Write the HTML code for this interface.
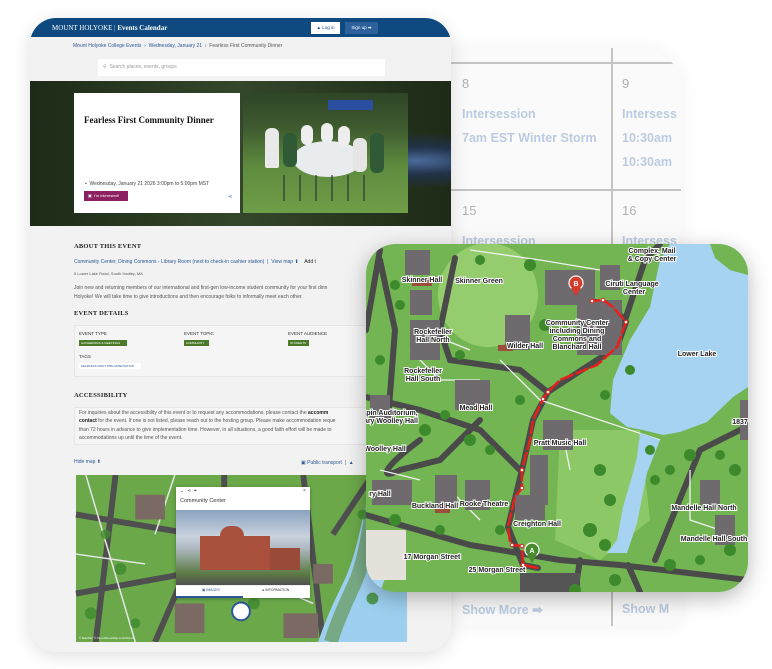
<!DOCTYPE html>
<html><head><meta charset="utf-8">
<style>
*{margin:0;padding:0;box-sizing:border-box}
body{width:772px;height:669px;background:#fff;position:relative;overflow:hidden;font-family:"Liberation Sans",sans-serif}
.a{position:absolute}
.cal{left:451px;top:48px;width:230px;height:578px;background:#fafafa;border-radius:0 40px 0 0;box-shadow:0 0 20px rgba(0,0,0,.06);overflow:hidden}
.cal .h{position:absolute;height:2px;background:#c4c4c4;left:0;right:0}
.cal .v{position:absolute;width:2px;background:#c4c4c4;top:0;bottom:0;left:160px}
.cal .n{position:absolute;color:#b0b0b0;font-size:13px}
.cal .t{position:absolute;color:#bccbe0;font-size:12.5px;font-weight:bold;white-space:nowrap}
.card{left:30px;top:18px;width:421px;height:634px;background:#f2f2f2;border-radius:26px;box-shadow:0 4px 18px rgba(0,0,0,.13);overflow:hidden}
.s{font-size:5px;color:#555;white-space:nowrap}
.lk{color:#2b5797}
.hd{font-family:"Liberation Serif",serif;font-weight:bold;font-size:6.5px;color:#222;letter-spacing:.2px}
.tag{background:#4c7a2a;color:#fff;font-size:3px;padding:1px 2px;display:inline-block;height:6px;overflow:hidden}
.mapc{left:366px;top:244px;width:382px;height:348px;border-radius:30px;overflow:hidden;box-shadow:0 6px 22px rgba(0,0,0,.28)}
</style></head><body>

<div class="a cal">
  <div class="h" style="top:14px"></div>
  <div class="h" style="top:141px"></div>
  <div class="v"></div>
  <div class="n" style="left:11px;top:28px">8</div>
  <div class="n" style="left:171px;top:28px">9</div>
  <div class="t" style="left:11px;top:59px">Intersession</div>
  <div class="t" style="left:11px;top:83px">7am EST Winter Storm</div>
  <div class="t" style="left:171px;top:59px">Intersess</div>
  <div class="t" style="left:171px;top:83px">10:30am</div>
  <div class="t" style="left:171px;top:107px">10:30am</div>
  <div class="n" style="left:11px;top:155px">15</div>
  <div class="n" style="left:171px;top:155px">16</div>
  <div class="t" style="left:11px;top:186px">Intersession</div>
  <div class="t" style="left:171px;top:186px">Intersess</div>
  <div class="t" style="left:11px;top:554px">Show More ➡</div>
  <div class="t" style="left:171px;top:554px">Show M</div>
</div>

<div class="a card">
  <div class="a" style="left:0;top:0;width:421px;height:19px;background:#0e4a80"></div>
  <div class="a" style="left:22px;top:6px;color:#fff;font-family:'Liberation Serif',serif;font-size:7px;white-space:nowrap">MOUNT HOLYOKE <span style="opacity:.8">|</span> <b>Events Calendar</b></div>
  <div class="a" style="left:281px;top:4px;width:29px;height:12px;background:#fff;font-size:4.5px;color:#0e4a80;text-align:center;line-height:12px">▲ Log in</div>
  <div class="a" style="left:315px;top:4px;width:33px;height:12px;background:#2d619e;font-size:4.5px;color:#fff;text-align:center;line-height:12px">Sign up ➡</div>
  <div class="a s lk" style="left:43px;top:25px">Mount Holyoke College Events &nbsp;›&nbsp; Wednesday, January 21 &nbsp;<span style="color:#555">›&nbsp; Fearless First Community Dinner</span></div>
  <div class="a" style="left:68px;top:41px;width:287px;height:17px;background:#fff"></div>
  <div class="a s" style="left:73px;top:46px;color:#999">⚲ &nbsp;Search places, events, groups</div>
  <div class="a" style="left:0;top:63px;width:421px;height:145px;background:radial-gradient(ellipse at 92% 55%,#4a6a9a 0,#22324a 12%,transparent 25%),linear-gradient(90deg,#1d2a17,#34472a 50%,#1d2a17);"></div>
  <div class="a" style="left:44px;top:75px;width:166px;height:120px;background:#fff"></div>
  <div class="a" style="left:213px;top:75px;width:165px;height:120px;background:linear-gradient(180deg,#2f4527 0,#3f5c30 30%,#5d8a3e 60%,#6f9e48 100%);overflow:hidden">
    <div class="a" style="left:85px;top:7px;width:45px;height:10px;background:#2a4fa0"></div>
    <div class="a" style="left:50px;top:48px;width:70px;height:36px;background:#e8ecef;border-radius:50%"></div>
    <div class="a" style="left:22px;top:35px;width:14px;height:40px;background:#e9e9e9;border-radius:6px 6px 2px 2px"></div>
    <div class="a" style="left:40px;top:40px;width:14px;height:34px;background:#2f5a35;border-radius:6px"></div>
    <div class="a" style="left:58px;top:32px;width:12px;height:20px;background:#eee;border-radius:6px"></div>
    <div class="a" style="left:78px;top:30px;width:12px;height:20px;background:#eee;border-radius:6px"></div>
    <div class="a" style="left:95px;top:33px;width:12px;height:20px;background:#eee;border-radius:6px"></div>
    <div class="a" style="left:110px;top:45px;width:14px;height:34px;background:#e5e5e5;border-radius:6px"></div>
    <div class="a" style="left:127px;top:40px;width:14px;height:40px;background:#2f5a35;border-radius:6px"></div>
    <div class="a" style="left:40px;top:82px;width:90px;height:26px;background:repeating-linear-gradient(90deg,#333 0 2px,transparent 2px 16px);opacity:.6"></div>
  </div>
  <div class="a" style="left:54px;top:97px;font-family:'Liberation Serif',serif;font-weight:bold;font-size:9px;color:#111;white-space:nowrap">Fearless First Community Dinner</div>
  <div class="a s" style="left:55px;top:163px;color:#444">▪ &nbsp;Wednesday, January 21 2026 3:00pm to 5:00pm MST</div>
  <div class="a" style="left:54px;top:173px;width:44px;height:10px;background:#8c2060;color:#fff;font-size:4px;line-height:10px;padding-left:4px">▣ &nbsp;I'm interested!</div>
  <div class="a" style="left:198px;top:176px;font-size:5px;color:#2b5797">⋖</div>

  <div class="a hd" style="left:44px;top:225px">ABOUT THIS EVENT</div>
  <div class="a s lk" style="left:44px;top:241px">Community Center, Dining Commons - Library Room (next to check-in cashier station) &nbsp;| &nbsp;View map ⬆ &nbsp;&nbsp;&nbsp;<span style="color:#222">Add t</span></div>
  <div class="a s" style="left:44px;top:253px;font-size:4px">5 Lower Lake Road, South Hadley, MA</div>
  <div class="a s" style="left:44px;top:266px;line-height:8.5px">Join new and returning members of our international and first-gen low-income student community for your first dinn<br>Holyoke! We will take time to give introductions and then encourage folks to informally meet each other.</div>
  <div class="a hd" style="left:44px;top:292px">EVENT DETAILS</div>
  <div class="a" style="left:44px;top:307px;width:300px;height:52px;border:1px solid #e6e6e6;background:#f5f5f5"></div>
  <div class="a s" style="left:49px;top:313px;font-size:4.5px;color:#333">EVENT TYPE</div>
  <div class="a s" style="left:154px;top:313px;font-size:4.5px;color:#333">EVENT TOPIC</div>
  <div class="a s" style="left:258px;top:313px;font-size:4.5px;color:#333">EVENT AUDIENCE</div>
  <div class="a tag" style="left:49px;top:322px;width:48px">GATHERINGS &amp; MEETINGS</div>
  <div class="a tag" style="left:154px;top:322px;width:25px">COMMUNITY</div>
  <div class="a tag" style="left:258px;top:322px;width:21px">STUDENTS</div>
  <div class="a s" style="left:49px;top:336px;font-size:4.5px;color:#333">TAGS</div>
  <div class="a" style="left:49px;top:345px;width:62px;height:6px;background:#fff;font-size:3px;color:#2b5797;padding:1px 2px;white-space:nowrap;overflow:hidden">FEARLESS FIRST PRE-ORIENTATION</div>
  <div class="a hd" style="left:44px;top:374px">ACCESSIBILITY</div>
  <div class="a" style="left:44px;top:389px;width:300px;height:38px;border:1px solid #e6e6e6;background:#f5f5f5"></div>
  <div class="a s" style="left:49px;top:391px;line-height:8.3px">For inquiries about the accessibility of this event or to request any accommodations, please contact the <b style="color:#222">accomm</b><br><b style="color:#222">contact</b> for the event. If one is not listed, please reach out to the hosting group. Please make accommodation reque<br>than 72 hours in advance to give implementation time. However, in all situations, a good faith effort will be made to<br>accommodations up until the time of the event.</div>
  <div class="a s lk" style="left:44px;top:441px">Hide map ⬆</div>
  <div class="a s lk" style="left:271px;top:442px">▣ Public transport &nbsp;|&nbsp; ▲</div>

  <svg class="a" style="left:44px;top:457px" width="335" height="167" viewBox="0 0 335 169">
    <rect width="335" height="169" fill="#6aa84a"/>
    <path d="M0 40 L120 60 M40 0 L20 169 M0 120 L110 100 L160 70 M80 169 L110 100 M150 0 L150 60 M230 0 L250 169 M260 60 L300 0" stroke="#4f4f4f" stroke-width="6" fill="none"/>
    <path d="M10 0 L60 169 M100 0 L80 60 M170 100 L240 130 M0 80 L70 90" stroke="#e6e6e6" stroke-width="1.5" fill="none"/>
    <path d="M300 0 C290 40 285 80 270 110 C255 140 250 155 245 169 L335 169 L335 0 Z" fill="#9dd0f0"/>
    <path d="M305 0 C298 40 295 80 282 110 C268 140 262 155 258 169" stroke="#5f8f3e" stroke-width="14" fill="none" opacity=".6"/>
    <g fill="#7a6a63"><rect x="60" y="20" width="30" height="25"/><rect x="210" y="140" width="35" height="25"/><rect x="100" y="130" width="30" height="30"/><rect x="240" y="90" width="20" height="20"/><rect x="130" y="20" width="20" height="20"/></g>
    <g fill="#3f8a2e" opacity=".8"><circle cx="30" cy="60" r="5"/><circle cx="45" cy="95" r="6"/><circle cx="180" cy="130" r="6"/><circle cx="300" cy="125" r="6"/><circle cx="290" cy="40" r="5"/><circle cx="15" cy="140" r="6"/><circle cx="130" cy="90" r="5"/><circle cx="60" cy="150" r="5"/></g>
    <circle cx="167" cy="138" r="9" fill="#fff" stroke="#2b5797" stroke-width="2"/>
    <text x="3" y="166" font-size="3" fill="#fff" font-family="Liberation Sans">© MapTiler © OpenStreetMap contributors</text>
  </svg>
  <div class="a" style="left:146px;top:469px;width:134px;height:111px;background:#fff;box-shadow:0 1px 4px rgba(0,0,0,.3)"></div>
  <div class="a s" style="left:150px;top:470px;font-size:5px;color:#444">⌄ &nbsp;⋖ &nbsp;⌖</div>
  <div class="a s" style="left:273px;top:470px;font-size:5px;color:#444">×</div>
  <div class="a s" style="left:150px;top:480px;font-size:5.5px;color:#333">Community Center</div>
  <div class="a" style="left:146px;top:492px;width:134px;height:75px;background:linear-gradient(180deg,#8aa2bf 0,#c9d3de 35%,#b0bac4 50%,#5c7a44 85%,#505050 100%)"></div>
  <div class="a" style="left:170px;top:518px;width:70px;height:34px;background:#a8503c"></div>
  <div class="a" style="left:190px;top:508px;width:24px;height:14px;background:#a8503c;border-radius:10px 10px 0 0"></div>
  <div class="a" style="left:240px;top:530px;width:30px;height:22px;background:#9a4a38"></div>
  <div class="a" style="left:146px;top:567px;width:134px;height:13px;border-top:1px solid #eee"></div>
  <div class="a" style="left:146px;top:578px;width:67px;height:2px;background:#2b5797"></div>
  <div class="a s" style="left:172px;top:570px;font-size:3.5px;color:#2b5797">▣ IMAGES</div>
  <div class="a s" style="left:232px;top:570px;font-size:3.5px;color:#333">● INFORMATION</div>
</div>

<div class="a mapc">
<svg width="382" height="348" viewBox="366 244 382 348">
  <rect x="366" y="244" width="382" height="348" fill="#72b552"/>
  <ellipse cx="488" cy="295" rx="50" ry="52" fill="#95cd6e"/>
  <path d="M560 430 L640 430 L650 520 L600 560 L555 540 Z" fill="#8cc866"/>
  <g stroke="#4a4a4a" stroke-width="6" fill="none" stroke-linecap="round">
    <path d="M366 397 L420 410 L480 430 L520 470 M366 330 L380 250 M455 258 L440 330 L450 360 L520 370 L545 390"/>
    <path d="M538 568 L523 565 L508 527 L522 470 L533 420 L548 392 L577 373 L617 347 L626 322 L613 307 L592 301"/>
    <path d="M625 320 L645 260 L660 244 M366 515 L470 545 L560 560 L620 565 L748 580"/>
    <path d="M420 440 C380 470 380 480 400 470 L440 460 L480 420 M655 560 L700 450 L740 430 M580 560 L575 592 M628 565 L640 592"/>
    <path d="M380 260 L395 330 L388 420"/>
  </g>
  <g stroke="#f0f0f0" stroke-width="1.3" fill="none">
    <path d="M420 330 L470 350 M500 360 L540 400 L600 420 L660 440 M560 420 L570 470 M440 480 L480 520 M470 250 L540 260 L600 270 M690 470 L690 520 L720 530 M380 470 L420 480 M410 350 L440 380 L480 380"/>
  </g>
  <path d="M670 244 L660 260 L650 307 L630 340 L613 380 L610 413 L627 427 L643 430 L663 435 L680 432 L707 422 L733 397 L748 387 L748 244 Z" fill="#a6d3f2"/>
  <path d="M710 244 L748 244 L748 275 L730 270 L715 258Z" fill="#72b552"/>
  <path d="M640 433 L637 457 L633 473 L623 507 L617 540 L607 553 L627 553 L637 523 L647 473 L660 440 Z" fill="#a6d3f2"/>
  <path d="M360 560 L390 565 L380 592 L366 592Z" fill="#a6d3f2"/>
  <rect x="366" y="530" width="40" height="50" fill="#e4e1da"/>
  <rect x="520" y="573" width="60" height="19" fill="#555"/>
  <g fill="#6e6a6d">
    <rect x="545" y="270" width="50" height="35"/><rect x="577" y="300" width="45" height="55"/><rect x="410" y="320" width="30" height="40"/>
    <rect x="505" y="315" width="25" height="35"/><rect x="455" y="380" width="35" height="30"/><rect x="543" y="420" width="30" height="30"/>
    <rect x="530" y="455" width="18" height="50"/><rect x="515" y="495" width="30" height="25"/><rect x="465" y="480" width="25" height="30"/>
    <rect x="435" y="475" width="22" height="30"/><rect x="372" y="480" width="40" height="25"/><rect x="370" y="395" width="20" height="25"/>
    <rect x="405" y="250" width="25" height="25"/><rect x="410" y="290" width="22" height="25"/><rect x="700" y="480" width="20" height="25"/>
    <rect x="715" y="515" width="20" height="30"/><rect x="740" y="400" width="8" height="40"/><rect x="600" y="265" width="20" height="25"/>
  </g>
  <g fill="#9a4f3c"><rect x="412" y="278" width="20" height="8"/><rect x="498" y="345" width="15" height="6"/><rect x="470" y="405" width="15" height="6"/><rect x="435" y="505" width="15" height="8"/></g>
  <g fill="#3d8a2c">
    <circle cx="530" cy="265" r="6"/><circle cx="395" cy="285" r="5"/><circle cx="400" cy="305" r="5"/><circle cx="460" cy="355" r="5"/><circle cx="470" cy="440" r="6"/><circle cx="490" cy="450" r="5"/><circle cx="600" cy="470" r="6"/><circle cx="610" cy="500" r="6"/><circle cx="590" cy="530" r="7"/><circle cx="605" cy="545" r="6"/><circle cx="655" cy="480" r="5"/><circle cx="670" cy="470" r="5"/><circle cx="690" cy="455" r="6"/><circle cx="720" cy="455" r="5"/><circle cx="735" cy="470" r="6"/><circle cx="730" cy="550" r="6"/><circle cx="700" cy="560" r="5"/><circle cx="670" cy="565" r="6"/><circle cx="380" cy="360" r="5"/><circle cx="425" cy="430" r="6"/><circle cx="445" cy="415" r="5"/><circle cx="630" cy="370" r="5"/><circle cx="605" cy="395" r="5"/><circle cx="545" cy="325" r="6"/><circle cx="480" cy="260" r="5"/><circle cx="395" cy="520" r="6"/><circle cx="440" cy="530" r="5"/><circle cx="500" cy="530" r="5"/><circle cx="575" cy="590" r="6"/><circle cx="615" cy="580" r="6"/><circle cx="650" cy="450" r="5"/><circle cx="520" cy="400" r="5"/>
  </g>
  <path d="M538 568 L523 565 L522 546 L512 545 L510 542 L508 527 L515 497 L522 488 L522 470 L530 440 L533 420 L543 399 L548 392 L560 380 L577 373 L597 365 L617 347 L626 322 L613 307 L603 300 L592 301" stroke="#e8201a" stroke-width="2.5" fill="none" stroke-dasharray="14 2"/>
  <g fill="#fff" stroke="#e8201a" stroke-width="1"><circle cx="523" cy="565" r="1.8"/><circle cx="522" cy="546" r="1.8"/><circle cx="512" cy="545" r="1.8"/><circle cx="522" cy="488" r="1.8"/><circle cx="522" cy="470" r="1.8"/><circle cx="548" cy="392" r="1.8"/><circle cx="543" cy="399" r="1.8"/><circle cx="626" cy="322" r="1.8"/><circle cx="603" cy="300" r="1.8"/><circle cx="592" cy="301" r="1.8"/></g>
  <circle cx="576" cy="283" r="7" fill="#d63a2a" stroke="#fff" stroke-width="1.2"/><path d="M571 288 L576 296 L581 288Z" fill="#d63a2a"/>
  <text x="576" y="286" font-size="7" fill="#fff" text-anchor="middle" font-family="Liberation Sans" font-weight="bold">B</text>
  <circle cx="532" cy="550" r="7" fill="#4a8a30" stroke="#fff" stroke-width="1.2"/><path d="M527 555 L532 563 L537 555Z" fill="#4a8a30"/>
  <text x="532" y="553" font-size="7" fill="#fff" text-anchor="middle" font-family="Liberation Sans" font-weight="bold">A</text>
  <g font-family="Liberation Sans" font-size="7" fill="#222" stroke="#fff" stroke-width="2" paint-order="stroke" font-weight="bold" text-anchor="middle">
    <text x="422" y="282">Skinner Hall</text>
    <text x="479" y="283">Skinner Green</text>
    <text x="652" y="253">Complex, Mail</text>
    <text x="652" y="261">&amp; Copy Center</text>
    <text x="632" y="286">Ciruti Language</text>
    <text x="634" y="294">Center</text>
    <text x="577" y="325">Community Center</text>
    <text x="577" y="333">including Dining</text>
    <text x="577" y="341">Commons and</text>
    <text x="577" y="349">Blanchard Hall</text>
    <text x="525" y="348">Wilder Hall</text>
    <text x="433" y="334">Rockefeller</text>
    <text x="433" y="342">Hall North</text>
    <text x="423" y="373">Rockefeller</text>
    <text x="423" y="381">Hall South</text>
    <text x="697" y="356">Lower Lake</text>
    <text x="476" y="410">Mead Hall</text>
    <text x="390" y="415">apin Auditorium,</text>
    <text x="388" y="423">Mary Woolley Hall</text>
    <text x="385" y="451">Woolley Hall</text>
    <text x="560" y="445">Pratt Music Hall</text>
    <text x="740" y="424">1837</text>
    <text x="380" y="496">ry Hall</text>
    <text x="435" y="508">Buckland Hall</text>
    <text x="484" y="506">Rooke Theatre</text>
    <text x="537" y="526">Creighton Hall</text>
    <text x="704" y="510">Mandelle Hall North</text>
    <text x="714" y="541">Mandelle Hall South</text>
    <text x="432" y="559">17 Morgan Street</text>
    <text x="497" y="572">25 Morgan Street</text>
  </g>
</svg>
</div>
</body></html>
